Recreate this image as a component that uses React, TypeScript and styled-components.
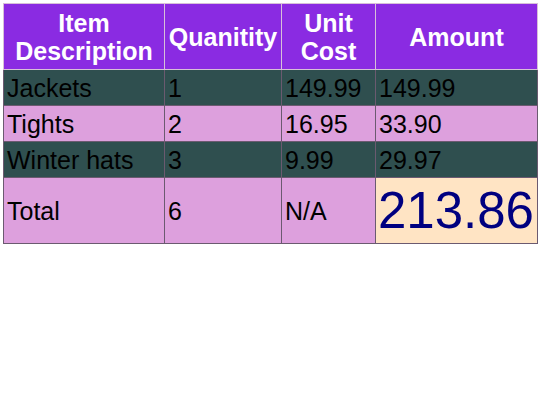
import React from "react";
import styled, { createGlobalStyle } from "styled-components";

const Global = createGlobalStyle`
  html, body { margin: 0; padding: 0; background: #ffffff; }
  body { padding: 3px; font-family: "Liberation Sans", Arial, sans-serif; }
`;

const Table = styled.table`
  border-collapse: collapse;
  width: 534px;
  table-layout: fixed;
  font-family: "Liberation Sans", Arial, sans-serif;
`;

const HeadCell = styled.th<{ $w: number }>`
  width: ${(p) => p.$w}px;
  height: 66px;
  box-sizing: border-box;
  padding: 0 1px;
  background: #8a2be2;
  color: #ffffff;
  font-weight: bold;
  font-size: 25px;
  line-height: 28px;
  text-align: center;
  vertical-align: middle;
  border: 1px solid #d8bfd8;
`;

const Row = styled.tr<{ $dark?: boolean; $tall?: boolean }>`
  height: ${(p) => (p.$tall ? 66 : 36)}px;
  background: ${(p) => (p.$dark ? "#2f4f4f" : "#dda0dd")};
`;

const Cell = styled.td<{ $highlight?: boolean }>`
  box-sizing: border-box;
  padding: 0 3px;
  font-size: 25px;
  line-height: 28px;
  color: #000000;
  vertical-align: middle;
  text-align: left;
  white-space: nowrap;
  overflow: visible;
  border: 1px solid #6b5a70;
  ${(p) =>
    p.$highlight
      ? `background: #ffe4c4; color: #000080; font-size: 51px; line-height: 56px; padding: 0 2px;`
      : ""}
`;

const rows = [
  { item: "Jackets", qty: "1", unit: "149.99", amount: "149.99", dark: true },
  { item: "Tights", qty: "2", unit: "16.95", amount: "33.90", dark: false },
  { item: "Winter hats", qty: "3", unit: "9.99", amount: "29.97", dark: true },
];

export default function App() {
  return (
    <>
      <Global />
      <Table>
        <thead>
          <tr>
            <HeadCell $w={161}>Item Description</HeadCell>
            <HeadCell $w={117}>Quanitity</HeadCell>
            <HeadCell $w={94}>Unit Cost</HeadCell>
            <HeadCell $w={162}>Amount</HeadCell>
          </tr>
        </thead>
        <tbody>
          {rows.map((r) => (
            <Row key={r.item} $dark={r.dark}>
              <Cell>{r.item}</Cell>
              <Cell>{r.qty}</Cell>
              <Cell>{r.unit}</Cell>
              <Cell>{r.amount}</Cell>
            </Row>
          ))}
          <Row $tall>
            <Cell>Total</Cell>
            <Cell>6</Cell>
            <Cell>N/A</Cell>
            <Cell $highlight>213.86</Cell>
          </Row>
        </tbody>
      </Table>
    </>
  );
}
